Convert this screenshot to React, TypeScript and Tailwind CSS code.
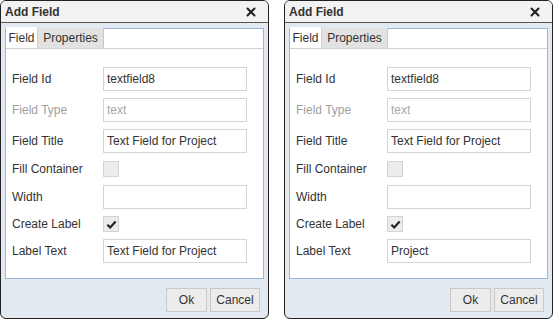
import { FiX } from "react-icons/fi";

type Row =
  | { kind: "input"; label: string; value: string; disabled?: boolean }
  | { kind: "check"; label: string; checked: boolean };

const rowsFor = (labelText: string): Row[] => [
  { kind: "input", label: "Field Id", value: "textfield8" },
  { kind: "input", label: "Field Type", value: "text", disabled: true },
  { kind: "input", label: "Field Title", value: "Text Field for Project" },
  { kind: "check", label: "Fill Container", checked: false },
  { kind: "input", label: "Width", value: "" },
  { kind: "check", label: "Create Label", checked: true },
  { kind: "input", label: "Label Text", value: labelText },
];

const Check = () => (
  <svg viewBox="0 0 12 12" className="h-[11px] w-[11px]">
    <path d="M1.5 6.2 L4.6 9.2 L10.5 2.8" fill="none" stroke="#222" strokeWidth="2.4" />
  </svg>
);

const FormRow = ({ row }: { row: Row }) => {
  if (row.kind === "check") {
    return (
      <div className="flex h-[16px] items-center">
        <span className="w-[91px] text-[#333]">{row.label}</span>
        <span className="flex h-[16px] w-[16px] items-center justify-center border border-[#d4d4d4] bg-[#ececec]">
          {row.checked && <Check />}
        </span>
      </div>
    );
  }
  return (
    <div className="flex h-[24px] items-center">
      <span className={`w-[91px] ${row.disabled ? "text-[#a0a0a0]" : "text-[#333]"}`}>{row.label}</span>
      <div
        className={`flex h-[24px] w-[144px] items-center border border-[#d4d4d4] bg-white px-[3px] ${
          row.disabled ? "text-[#a8a8a8]" : "text-[#333]"
        }`}
      >
        {row.value}
      </div>
    </div>
  );
};

const Dialog = ({ labelText }: { labelText: string }) => (
  <div className="flex h-[319px] w-[269px] flex-col overflow-hidden rounded-[6px] border border-[#222] bg-[#e3e9f0]">
    <div className="flex h-[22px] items-center justify-between border-b border-[#555] bg-[#f2f2f2] pl-[4px] pr-[10px]">
      <span className="text-[12px] font-bold text-[#333]">Add Field</span>
      <FiX className="h-[14px] w-[14px] text-[#222]" strokeWidth={3.5} />
    </div>
    <div className="px-[4px] pt-[5px]">
      <div className="flex h-[251px] flex-col border border-[#99b5d8] bg-white">
        <div className="flex h-[20px] items-end border-b border-[#d0d0d0]">
          <span className="flex h-[21px] w-[32px] items-center justify-center border-r border-[#d0d0d0] bg-white text-[#333]">
            Field
          </span>
          <span className="flex h-[20px] w-[66px] items-center justify-center border-r border-[#c8c8c8] bg-[#e2e2e2] text-[#333]">
            Properties
          </span>
        </div>
        <div className="flex flex-col gap-[7px] pl-[6px] pt-[18px]">
          {rowsFor(labelText).map((row, i) => (
            <div key={i} className={i === 3 || i === 4 ? "mt-[1px]" : ""}>
              <FormRow row={row} />
            </div>
          ))}
        </div>
      </div>
    </div>
    <div className="flex flex-1 items-center justify-end gap-[3px] pr-[8px] pt-[3px]">
      <button className="h-[24px] w-[41px] border border-[#c9c9c9] bg-[#ececec] text-[#333]">Ok</button>
      <button className="h-[24px] w-[50px] border border-[#c9c9c9] bg-[#ececec] text-[#333]">Cancel</button>
    </div>
  </div>
);

export default function App() {
  return (
    <div className="flex h-[320px] w-[553px] justify-between bg-white font-['Liberation_Sans',Arial,sans-serif] text-[12px]">
      <Dialog labelText="Text Field for Project" />
      <Dialog labelText="Project" />
    </div>
  );
}
